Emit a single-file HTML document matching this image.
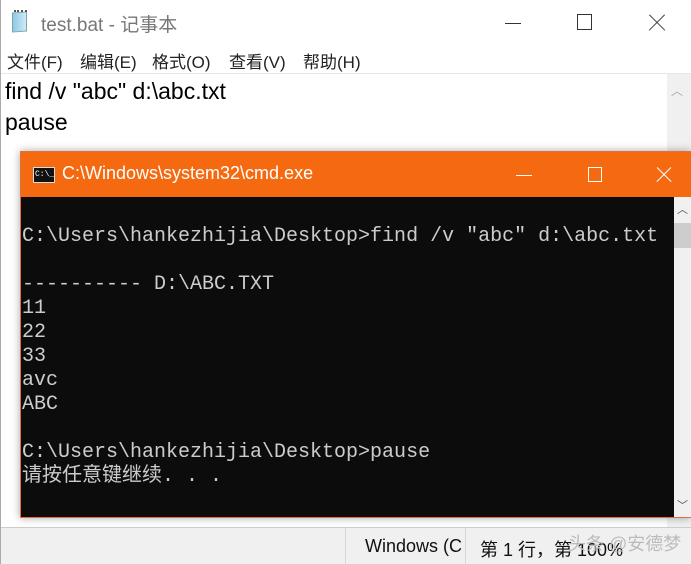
<!DOCTYPE html>
<html><head><meta charset="utf-8"><style>
*{margin:0;padding:0;box-sizing:border-box}
body{width:691px;height:564px;overflow:hidden;background:#fff;position:relative;font-family:"Liberation Sans","Noto Sans CJK SC",sans-serif}
.abs{position:absolute}
.t{color:#777;font-size:19px}
.menu{font-size:17px;color:#222;top:48px}
.ed{font-size:23px;color:#000;left:5px}
.cmdtxt{font-family:"Liberation Mono","Noto Sans CJK SC",monospace;font-size:20px;color:#cccccc;line-height:24px;white-space:pre;left:22px;top:225px}
.x1,.x2{position:absolute;width:22px;height:1.3px}
.x1{transform:rotate(45deg)}.x2{transform:rotate(-45deg)}
</style></head><body>
<div class="abs" style="left:0;top:0;width:1px;height:564px;background:#aaa"></div>
<div class="abs" style="left:12px;top:12px;width:15px;height:20px;background:linear-gradient(90deg,#8fc8e8,#cfe9f7);border:1px solid #7aa;transform:skewY(-4deg)"></div>
<div class="abs" style="left:14px;top:10px;width:13px;height:3px;border-top:2px dotted #555"></div>
<div class="abs t" style="left:41px;top:10px">test.bat - 记事本</div>
<div class="abs" style="left:505px;top:23px;width:16px;height:1px;background:#333"></div>
<div class="abs" style="left:577px;top:14px;width:15px;height:16px;border:1px solid #333"></div>
<div class="abs" style="left:646px;top:22px"><div class="x1" style="background:#444"></div><div class="x2" style="background:#444"></div></div>
<div class="abs menu" style="left:7px">文件(F)</div>
<div class="abs menu" style="left:80px">编辑(E)</div>
<div class="abs menu" style="left:152px">格式(O)</div>
<div class="abs menu" style="left:229px">查看(V)</div>
<div class="abs menu" style="left:303px">帮助(H)</div>
<div class="abs" style="left:1px;top:73px;width:690px;height:1px;background:#e8e8e8"></div>
<div class="abs ed" style="top:78px">find /v "abc" d:\abc.txt</div>
<div class="abs ed" style="top:109px">pause</div>
<div class="abs" style="left:667px;top:74px;width:24px;height:454px;background:#f0f0f0"></div>
<div class="abs" style="left:671px;top:82px;font-size:12px;color:#aaa">︿</div>
<div class="abs" style="left:1px;top:527px;width:690px;height:37px;background:#f0f0f0;border-top:1px solid #ccc"></div>
<div class="abs" style="left:345px;top:528px;width:1px;height:36px;background:#d8d8d8"></div>
<div class="abs" style="left:465px;top:528px;width:1px;height:36px;background:#d8d8d8"></div>
<div class="abs" style="left:365px;top:536px;font-size:18px;color:#111">Windows (C</div>
<div class="abs" style="left:480px;top:536px;font-size:18px;color:#111">第 1 行，第 100%</div>
<div class="abs" style="left:568px;top:530px;font-size:18px;color:#bbb">头条 @安德梦</div>
<div class="abs" style="left:20px;top:151px;width:671px;height:367px;box-shadow:0 0 8px rgba(0,0,0,.35);border:1px solid #e07040"></div>
<div class="abs" style="left:21px;top:152px;width:670px;height:45px;background:#f56a11"></div>
<div class="abs" style="left:33px;top:167px;width:22px;height:16px;background:#111;border:1px solid #ddd;color:#fff;font-size:8px;font-family:'Liberation Mono',monospace;line-height:14px;padding-left:1px">C:\_</div>
<div class="abs" style="left:62px;top:163px;color:#fff;font-size:18px">C:\Windows\system32\cmd.exe</div>
<div class="abs" style="left:516px;top:175px;width:16px;height:1px;background:#fff"></div>
<div class="abs" style="left:588px;top:167px;width:14px;height:15px;border:1px solid #fff"></div>
<div class="abs" style="left:654px;top:174px"><div class="x1" style="background:#fff;width:20px"></div><div class="x2" style="background:#fff;width:20px"></div></div>
<div class="abs" style="left:21px;top:197px;width:653px;height:320px;background:#0c0c0c"></div>
<div class="abs" style="left:674px;top:197px;width:17px;height:320px;background:#f0f0f0"></div>
<div class="abs" style="left:674px;top:223px;width:17px;height:25px;background:#cdcdcd"></div>
<div class="abs" style="left:677px;top:201px;font-size:11px;color:#555">︿</div>
<div class="abs" style="left:677px;top:497px;font-size:11px;color:#555">﹀</div>
<div class="abs cmdtxt">C:\Users\hankezhijia\Desktop>find /v "abc" d:\abc.txt

---------- D:\ABC.TXT
11
22
33
avc
ABC

C:\Users\hankezhijia\Desktop>pause
请按任意键继续. . .</div>
</body></html>
